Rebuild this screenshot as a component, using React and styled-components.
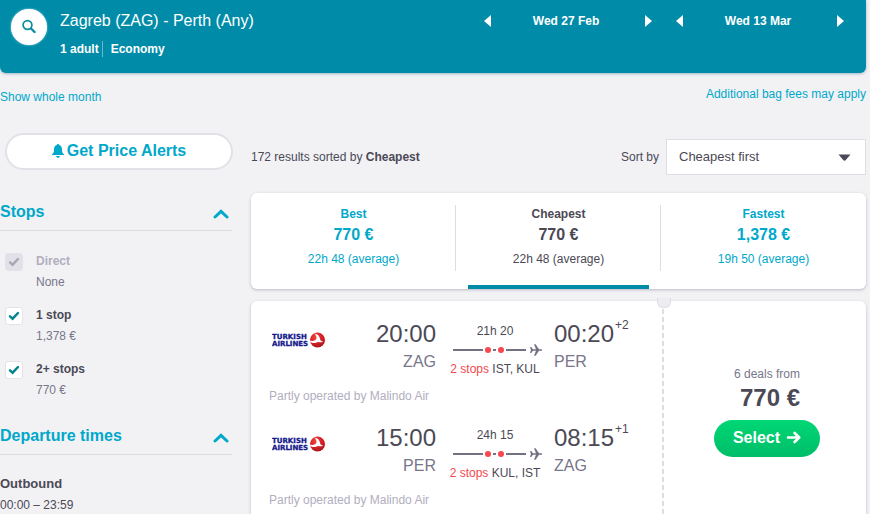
import React, { useState } from "react";
import styled, { createGlobalStyle, ThemeProvider } from "styled-components";

const theme = {
  teal: "#008ca8",
  blue: "#00a8ca",
  text: "#4b4955",
  grey: "#78768a",
  light: "#b1aec0",
  page: "#f2f2f5",
  line: "#dddde4",
  red: "#f5484f"
};

const GlobalStyle = createGlobalStyle`
  * {
    box-sizing: border-box;
  }

  html {
    scrollbar-width: none;
  }

  body {
    margin: 0;
    background-color: ${theme.page};
    color: ${theme.text};
    font-family: "Liberation Sans", Arial, sans-serif;
    font-size: 12px;
    line-height: 16px;
  }

  button, select, input {
    margin: 0;
    font: inherit;
    color: inherit;
  }

  button {
    padding: 0;
    border: none;
    background: none;
    cursor: pointer;
  }

  h1, h2, h3, p {
    margin: 0;
  }
`;

const Page = styled.div`
  padding-right: 4px;
`;

const Header = styled.header`
  display: flex;
  justify-content: space-between;
  align-items: flex-start;
  height: 73px;
  padding: 9px 22px 0 11px;
  border-radius: 0 0 6px 6px;
  background-color: ${props => props.theme.teal};
  color: white;
  box-shadow: 0 1px 3px rgba(0, 80, 110, 0.35);
`;

const SearchInfo = styled.div`
  display: flex;
  gap: 13px;
`;

const SearchButton = styled.button`
  display: flex;
  align-items: center;
  justify-content: center;
  width: 36px;
  height: 36px;
  border-radius: 50%;
  background-color: white;
  box-shadow: 0 0 2px #bfe3f5;
`;

const Route = styled.h1`
  font-size: 16px;
  font-weight: normal;
  line-height: 24px;
`;

const Passengers = styled.p`
  display: flex;
  margin-top: 8px;
  font-weight: bold;

  span + span {
    margin-left: 3px;
    padding-left: 8px;
    border-left: 1px solid #66bacb;
  }
`;

const Dates = styled.div`
  display: flex;
  gap: 24px;
  padding-top: 4px;
`;

const DatePicker = styled.div`
  display: flex;
  align-items: center;
  width: 168px;
  font-weight: bold;
`;

const DateText = styled.span`
  flex: 1;
  padding-right: 4px;
  text-align: center;
`;

const ArrowButton = styled.button`
  display: flex;
  align-items: center;
  height: 16px;
`;

const Links = styled.nav`
  display: flex;
  justify-content: space-between;
  height: 60px;
  padding-top: 13px;
`;

const TextLink = styled.a`
  padding-top: ${props => (props.$low ? 3 : 0)}px;
  color: ${props => props.theme.blue};
  text-decoration: none;
`;

const Columns = styled.div`
  display: grid;
  grid-template-columns: 233px minmax(0, 1fr);
  column-gap: 18px;
`;

const AlertButton = styled.button`
  display: flex;
  align-items: center;
  justify-content: center;
  gap: 3px;
  width: 228px;
  height: 37px;
  margin: 0 0 4px 5px;
  padding-bottom: 2px;
  border: 2px solid #e1e1e7;
  border-radius: 19px;
  background-color: white;
  color: ${props => props.theme.blue};
  font-size: 16px;
  font-weight: bold;
`;

const FilterHeading = styled.h2`
  height: 57px;
  padding-top: 26px;
  border-bottom: 1px solid ${props => props.theme.line};
  margin-right: 1px;

  button {
    display: flex;
    align-items: center;
    justify-content: space-between;
    width: 100%;
    padding-right: 3px;
    color: ${props => props.theme.blue};
    font-size: 16px;
    font-weight: bold;
    line-height: 24px;
  }

  svg {
    margin-top: 4px;
  }
`;

const StopList = styled.div`
  display: flex;
  flex-direction: column;
  gap: 17px;
  padding: 22px 0 0 5px;
`;

const StopRow = styled.label`
  display: grid;
  grid-template-columns: 18px 1fr;
  column-gap: 13px;
  align-items: start;
`;

const CheckWrap = styled.span`
  display: grid;
  place-items: center;

  > * {
    grid-area: 1 / 1;
  }

  svg {
    pointer-events: none;
  }
`;

const CheckInput = styled.input`
  appearance: none;
  width: 18px;
  height: 18px;
  border: 1px solid #e3e1ea;
  border-radius: 3px;
  background-color: white;

  &:disabled {
    background-color: #e2e0e8;
  }

  &:not(:checked) + svg {
    visibility: hidden;
  }
`;

const StopName = styled.span`
  display: block;
  color: ${props => (props.$disabled ? props.theme.light : props.theme.text)};
  font-weight: bold;
`;

const StopPrice = styled.span`
  display: block;
  margin-top: 5px;
  color: ${props => props.theme.grey};
`;

const TimeFilter = styled.div`
  padding-top: 21px;

  h3 {
    font-size: 13px;
  }

  p {
    margin-top: 5px;
  }
`;

const Toolbar = styled.div`
  display: flex;
  align-items: center;
  justify-content: space-between;
  padding: 6px 0 18px;
`;

const SortControl = styled.div`
  display: flex;
  align-items: center;
  gap: 7px;
`;

const SelectWrap = styled.div`
  position: relative;

  svg {
    position: absolute;
    top: 15px;
    right: 15px;
    pointer-events: none;
  }
`;

const SortSelect = styled.select`
  appearance: none;
  width: 200px;
  height: 36px;
  padding: 0 12px;
  border: 1px solid ${props => props.theme.line};
  border-radius: 0;
  background-color: white;
  font-size: 13px;
`;

const Card = styled.section`
  display: flex;
  border-radius: 6px;
  background-color: white;
  box-shadow: 0 1px 3px rgba(60, 50, 90, 0.3);
`;

const SortTab = styled.button`
  position: relative;
  flex: 1;
  height: 96px;
  padding: 13px 0 22px;
  color: ${props => (props.$active ? props.theme.text : props.theme.blue)};

  &:not(:first-child)::before {
    content: "";
    position: absolute;
    top: 12px;
    left: -1px;
    width: 1px;
    height: 66px;
    background-color: ${props => props.theme.line};
  }

  &::after {
    content: "";
    position: absolute;
    right: 12px;
    bottom: 0;
    left: 12px;
    height: 4px;
    background-color: ${props => (props.$active ? props.theme.teal : "transparent")};
  }
`;

const TabName = styled.span`
  display: block;
  font-weight: bold;
`;

const TabPrice = styled.span`
  display: block;
  font-size: 16px;
  font-weight: bold;
  line-height: 26px;
`;

const TabTime = styled.span`
  display: block;
  margin-top: 3px;
`;

const Ticket = styled(Card)`
  margin-top: 12px;
`;

const Legs = styled.div`
  flex: 1;
  display: flex;
  flex-direction: column;
  gap: 18px;
  padding: 17px 18px 14px;
`;

const LegRow = styled.div`
  display: grid;
  grid-template-columns: 60px minmax(0, 94px) 92px 1fr;
  column-gap: 13px;
`;

const LogoCell = styled.div`
  padding: 13px 0 0 3px;
`;

const Stop = styled.div`
  text-align: ${props => (props.$right ? "right" : "left")};
`;

const Time = styled.div`
  display: flex;
  justify-content: ${props => (props.$right ? "flex-end" : "flex-start")};
  font-size: 24px;
  line-height: 32px;

  sup {
    padding-left: 1px;
    font-size: 12px;
    line-height: 14px;
  }
`;

const Airport = styled.div`
  color: ${props => props.theme.grey};
  font-size: 16px;
  line-height: 24px;
`;

const Duration = styled.div`
  padding-top: 5px;
  text-align: center;
  white-space: nowrap;

  svg {
    display: block;
    margin: 5px 0 5px 4px;
  }
`;

const StopCount = styled.span`
  color: ${props => props.theme.red};
`;

const Operator = styled.p`
  margin-top: 11px;
  color: ${props => props.theme.light};
`;

const Deal = styled.div`
  position: relative;
  display: flex;
  flex-direction: column;
  align-items: flex-end;
  justify-content: center;
  width: 204px;
  padding-right: 46px;

  /* perforated edge of the ticket */
  &::before {
    content: "";
    position: absolute;
    top: 8px;
    bottom: 0;
    left: 0;
    width: 2px;
    background: repeating-linear-gradient(${props => props.theme.line} 0 5px, transparent 5px 8px);
  }

  &::after {
    content: "";
    position: absolute;
    top: -3px;
    left: -5px;
    width: 12px;
    height: 9px;
    border: 1px solid ${props => props.theme.line};
    border-top: none;
    border-radius: 0 0 6px 6px;
    background-color: #ededf1;
  }
`;

const DealText = styled.span`
  padding-right: 20px;
  color: ${props => props.theme.grey};
`;

const DealPrice = styled.strong`
  padding-right: 20px;
  font-size: 24px;
  line-height: 32px;
`;

const SelectButton = styled.button`
  display: flex;
  align-items: center;
  justify-content: center;
  gap: 6px;
  width: 106px;
  height: 37px;
  margin-top: 6px;
  padding-bottom: 2px;
  border-radius: 19px;
  background: linear-gradient(#00d775, #00bd68);
  color: white;
  font-size: 16px;
  font-weight: bold;
`;

const SearchIcon = () => (
  <svg width="16" height="16" viewBox="0 0 16 16" fill="none" stroke="#0a8c9c" strokeLinecap="round">
    <circle cx="6.500" cy="6" r="4.400" strokeWidth="1.700" />
    <path d="M10 9.500L13.600 13" strokeWidth="2.400" />
  </svg>
);

const Triangle = ({ right }) => (
  <svg width="7" height="12" viewBox="0 0 7 12" fill="white">
    <path d={right ? "M0 0L7 6L0 12Z" : "M7 0L0 6L7 12Z"} />
  </svg>
);

const BellIcon = () => (
  <svg width="12" height="14" viewBox="0 0 12 14" fill="currentColor">
    <path d="M6 0C6.700 0 7.100 .5 7.100 1.100C9 1.700 10 3.200 10 5.200C10 8.200 10.500 9.300 12 10.200V11H0V10.200C1.500 9.300 2 8.200 2 5.200C2 3.200 3 1.700 4.900 1.100C4.900 .5 5.300 0 6 0Z" />
    <path d="M4 12H8C7.700 13.200 7 13.800 6 13.800S4.300 13.200 4 12Z" />
  </svg>
);

const ChevronIcon = () => (
  <svg width="16" height="10" viewBox="0 0 16 10" fill="none" stroke="currentColor" strokeWidth="3">
    <path d="M2 8L8 2.400L14 8" strokeLinecap="round" />
  </svg>
);

const CheckIcon = ({ color }) => (
  <svg width="12" height="10" viewBox="0 0 12 10" fill="none" stroke={color} strokeWidth="2.400">
    <path d="M2 5.300L4.600 7.700L10 2" strokeLinecap="round" />
  </svg>
);

const CaretIcon = () => (
  <svg width="13" height="7" viewBox="0 0 13 7" fill="#4b4955">
    <path d="M.5 .5H12.500L8 5.800Q6.500 7.500 5 5.800Z" />
  </svg>
);

const ArrowRightIcon = () => (
  <svg width="15" height="13" viewBox="0 0 15 13" fill="none" stroke="currentColor" strokeWidth="2.600" strokeLinecap="round" strokeLinejoin="round">
    <path d="M2 6.500H13M8.600 2L13.200 6.500L8.600 11" />
  </svg>
);

const TurkishLogo = () => (
  <svg width="54" height="18" viewBox="0 0 54 18" role="img" aria-label="Turkish Airlines">
    <defs>
      <radialGradient id="emblem" cx="0.4" cy="0.3" r="0.8">
        <stop offset="0" stopColor="#ee4a42" />
        <stop offset="0.5" stopColor="#d81f26" />
        <stop offset="1" stopColor="#9c1418" />
      </radialGradient>
    </defs>
    <g fill="#14188c" stroke="#14188c" strokeWidth="0.3" fontFamily="DejaVu Sans, sans-serif" fontWeight="bold" fontSize="7">
      <text x="0" y="8">TURKISH</text>
      <text x="0" y="15">AIRLINES</text>
    </g>
    <circle cx="45.500" cy="9" r="7.500" fill="url(#emblem)" />
    <path d="M38.100 9.600C40.500 10.400 43 9.700 44.500 7.700C44.800 6 44 4.200 42.300 2.600C45.500 3.200 48 5.600 48.200 8.600C48.300 9.700 49.300 10.300 51.300 10.500C49.500 11.600 47.500 11.500 46 11C43.500 12.300 40 12.200 38.300 11Z" fill="white" />
  </svg>
);

const FlightLine = () => (
  <svg width="90" height="12" viewBox="0 0 90 12">
    <path d="M0 6H30M40 6H43M53 6H73" stroke="#737182" strokeWidth="2" />
    <circle cx="35" cy="6" r="3" fill="#f5484f" />
    <circle cx="48" cy="6" r="3" fill="#f5484f" />
    <path
      d="M77 3H78.200L80 5.300H83L81 .3H82.600L86 5.300H88C88.800 5.300 89.300 5.600 89.300 6S88.800 6.700 88 6.700H86L82.600 11.700H81L83 6.700H80L78.200 9H77L77.900 6Z"
      fill="#737182"
    />
  </svg>
);

const dates = ["Wed 27 Feb", "Wed 13 Mar"];

const stopFilters = [
  { id: "direct", name: "Direct", price: "None", disabled: true },
  { id: "one", name: "1 stop", price: "1,378 €" },
  { id: "two", name: "2+ stops", price: "770 €" }
];

const tabs = [
  { name: "Best", price: "770 €", time: "22h 48 (average)" },
  { name: "Cheapest", price: "770 €", time: "22h 48 (average)" },
  { name: "Fastest", price: "1,378 €", time: "19h 50 (average)" }
];

const legs = [
  { depart: "20:00", from: "ZAG", duration: "21h 20", via: "IST, KUL", arrive: "00:20", days: "+2", to: "PER" },
  { depart: "15:00", from: "PER", duration: "24h 15", via: "KUL, IST", arrive: "08:15", days: "+1", to: "ZAG" }
];

const FilterTitle = ({ children }) => (
  <FilterHeading>
    <button type="button">
      {children}
      <ChevronIcon />
    </button>
  </FilterHeading>
);

const Leg = ({ leg }) => (
  <div>
    <LegRow>
      <LogoCell>
        <TurkishLogo />
      </LogoCell>
      <Stop $right>
        <Time $right>{leg.depart}</Time>
        <Airport>{leg.from}</Airport>
      </Stop>
      <Duration>
        {leg.duration}
        <FlightLine />
        <StopCount>2 stops</StopCount> {leg.via}
      </Duration>
      <Stop>
        <Time>
          {leg.arrive}
          <sup>{leg.days}</sup>
        </Time>
        <Airport>{leg.to}</Airport>
      </Stop>
    </LegRow>
    <Operator>Partly operated by Malindo Air</Operator>
  </div>
);

const App = () => {
  const [active, setActive] = useState("Cheapest");

  return (
    <ThemeProvider theme={theme}>
      <GlobalStyle />
      <Page>
        <Header>
          <SearchInfo>
            <SearchButton type="button" aria-label="Search">
              <SearchIcon />
            </SearchButton>
            <div>
              <Route>Zagreb (ZAG) - Perth (Any)</Route>
              <Passengers>
                <span>1 adult</span>
                <span>Economy</span>
              </Passengers>
            </div>
          </SearchInfo>
          <Dates>
            {dates.map(date => (
              <DatePicker key={date}>
                <ArrowButton type="button" aria-label="Previous day">
                  <Triangle />
                </ArrowButton>
                <DateText>{date}</DateText>
                <ArrowButton type="button" aria-label="Next day">
                  <Triangle right />
                </ArrowButton>
              </DatePicker>
            ))}
          </Dates>
        </Header>
        <Links>
          <TextLink $low href="#month">
            Show whole month
          </TextLink>
          <TextLink href="#bags">Additional bag fees may apply</TextLink>
        </Links>
        <Columns>
          <aside>
            <AlertButton type="button">
              <BellIcon />
              Get Price Alerts
            </AlertButton>
            <FilterTitle>Stops</FilterTitle>
            <StopList>
              {stopFilters.map(stop => (
                <StopRow key={stop.id} htmlFor={stop.id}>
                  <CheckWrap>
                    <CheckInput id={stop.id} type="checkbox" defaultChecked disabled={stop.disabled} />
                    <CheckIcon color={stop.disabled ? "#aaa7b5" : "#008490"} />
                  </CheckWrap>
                  <span>
                    <StopName $disabled={stop.disabled}>{stop.name}</StopName>
                    <StopPrice>{stop.price}</StopPrice>
                  </span>
                </StopRow>
              ))}
            </StopList>
            <FilterTitle>Departure times</FilterTitle>
            <TimeFilter>
              <h3>Outbound</h3>
              <p>00:00 – 23:59</p>
            </TimeFilter>
          </aside>
          <main>
            <Toolbar>
              <span>
                172 results sorted by <b>Cheapest</b>
              </span>
              <SortControl>
                <label htmlFor="sort">Sort by</label>
                <SelectWrap>
                  <SortSelect id="sort" defaultValue="cheapest">
                    <option value="cheapest">Cheapest first</option>
                  </SortSelect>
                  <CaretIcon />
                </SelectWrap>
              </SortControl>
            </Toolbar>
            <Card>
              {tabs.map(tab => (
                <SortTab key={tab.name} type="button" $active={tab.name === active} onClick={() => setActive(tab.name)}>
                  <TabName>{tab.name}</TabName>
                  <TabPrice>{tab.price}</TabPrice>
                  <TabTime>{tab.time}</TabTime>
                </SortTab>
              ))}
            </Card>
            <Ticket>
              <Legs>
                {legs.map(leg => (
                  <Leg key={leg.depart} leg={leg} />
                ))}
              </Legs>
              <Deal>
                <DealText>6 deals from</DealText>
                <DealPrice>770 €</DealPrice>
                <SelectButton type="button">
                  Select
                  <ArrowRightIcon />
                </SelectButton>
              </Deal>
            </Ticket>
          </main>
        </Columns>
      </Page>
    </ThemeProvider>
  );
};

export default App;
